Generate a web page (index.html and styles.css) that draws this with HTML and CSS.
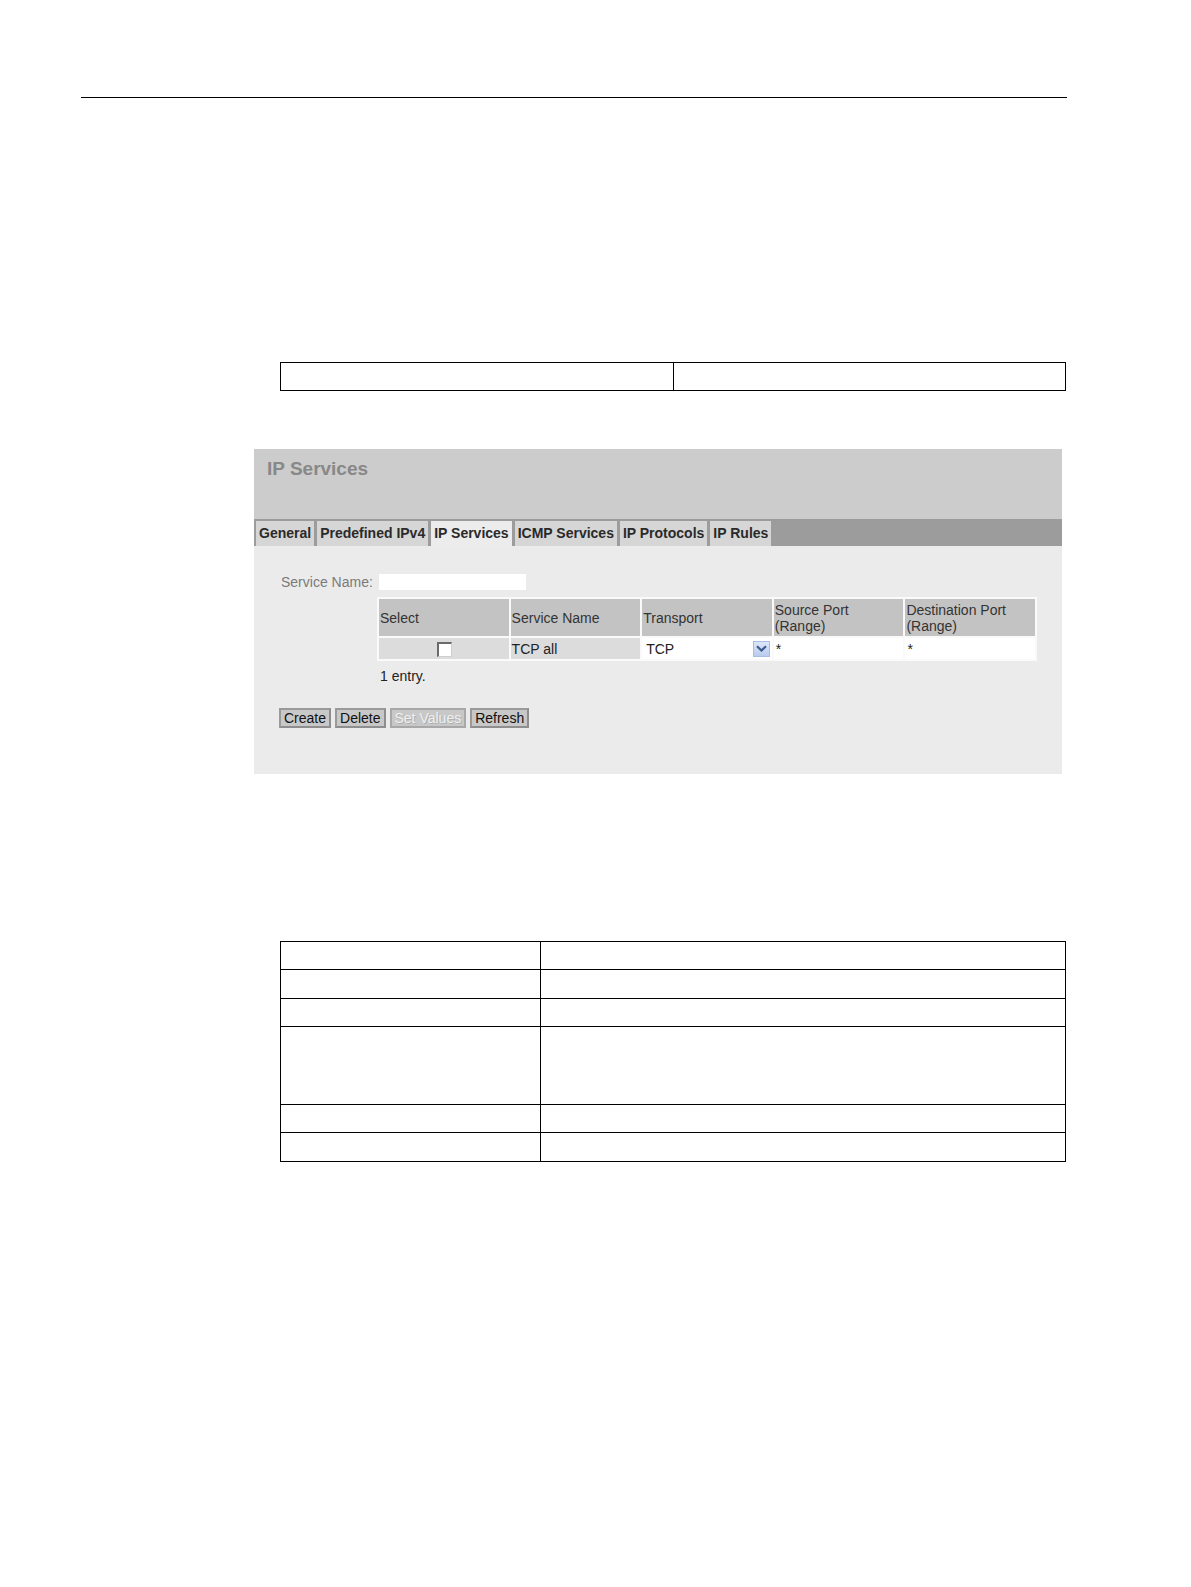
FILE: index.html
```html
<!DOCTYPE html>
<html lang="en">
<head>
<meta charset="utf-8">
<title>IP Services</title>
<link rel="stylesheet" href="styles.css">
</head>
<body>
<div class="page">
  <div class="rule"></div>

  <table class="doc-table doc-table-top">
    <tr><td class="c1"></td><td class="c2"></td></tr>
  </table>

  <div class="panel">
    <div class="panel-head">
      <h1 class="panel-title">IP Services</h1>
    </div>
    <div class="tabbar">
      <div class="tab">General</div>
      <div class="tab">Predefined IPv4</div>
      <div class="tab tab-active">IP Services</div>
      <div class="tab">ICMP Services</div>
      <div class="tab">IP Protocols</div>
      <div class="tab">IP Rules</div>
    </div>
    <div class="panel-body">
      <div class="name-row">
        <span class="name-label">Service Name:</span>
        <span class="name-input"></span>
      </div>
      <table class="svc-table">
        <thead>
          <tr>
            <th>Select</th>
            <th>Service Name</th>
            <th>Transport</th>
            <th>Source Port<br>(Range)</th>
            <th>Destination Port<br>(Range)</th>
          </tr>
        </thead>
        <tbody>
          <tr>
            <td class="cell-gray cell-center"><span class="checkbox"></span></td>
            <td class="cell-gray">TCP all</td>
            <td class="cell-white">
              <div class="select">
                <span class="select-value">TCP</span>
                <span class="select-arrow">
                  <svg width="11" height="7" viewBox="0 0 11 7"><path d="M1 1.2 L5.5 5.5 L10 1.2" fill="none" stroke="#3d5a8f" stroke-width="2.2"/></svg>
                </span>
              </div>
            </td>
            <td class="cell-white">*</td>
            <td class="cell-white">*</td>
          </tr>
        </tbody>
      </table>
      <div class="entries">1 entry.</div>
      <div class="buttons">
        <span class="btn">Create</span>
        <span class="btn">Delete</span>
        <span class="btn btn-disabled">Set Values</span>
        <span class="btn">Refresh</span>
      </div>
    </div>
  </div>

  <table class="doc-table doc-table-bottom">
    <tr class="r1"><td class="b1"></td><td class="b2"></td></tr>
    <tr class="r2"><td></td><td></td></tr>
    <tr class="r3"><td></td><td></td></tr>
    <tr class="r4"><td></td><td></td></tr>
    <tr class="r5"><td></td><td></td></tr>
    <tr class="r6"><td></td><td></td></tr>
  </table>
</div>
</body>
</html>
```

FILE: styles.css
```css
html, body {
  margin: 0;
  padding: 0;
  background: #ffffff;
}

body {
  font-family: "Liberation Sans", Arial, sans-serif;
  color: #000;
}

.page {
  padding-top: 97px;
}

.rule {
  margin-left: 81px;
  width: 986px;
  border-top: 1.5px solid #000;
}

/* document tables */
.doc-table {
  border-collapse: collapse;
  table-layout: fixed;
  margin-left: 280px;
  width: 786px;
}

.doc-table td {
  border: 1.5px solid #000;
  padding: 0;
}

.doc-table-top {
  margin-top: 264px;
}

.doc-table-top td {
  height: 27px;
}

.doc-table-top .c1 { width: 392px; }

.doc-table-bottom {
  margin-top: 167px;
}

.doc-table-bottom .b1 { width: 259px; }

.doc-table-bottom .r1 td { height: 27px; }
.doc-table-bottom .r2 td { height: 28px; }
.doc-table-bottom .r3 td { height: 27px; }
.doc-table-bottom .r4 td { height: 77px; }
.doc-table-bottom .r5 td { height: 27px; }
.doc-table-bottom .r6 td { height: 28px; }

/* screenshot panel */
.panel {
  margin-top: 58px;
  margin-left: 254px;
  width: 808px;
  height: 325px;
  display: flex;
  flex-direction: column;
  font-family: "Liberation Sans", Arial, sans-serif;
}

.panel-head {
  height: 70px;
  background: #cccccc;
  box-sizing: border-box;
  padding: 9px 0 0 13px;
}

.panel-title {
  margin: 0;
  font-size: 19px;
  font-weight: bold;
  color: #888888;
  line-height: 22px;
}

.tabbar {
  height: 27px;
  background: #9c9c9c;
  display: flex;
  align-items: flex-end;
  gap: 3px;
  padding-left: 2px;
}

.tab {
  height: 25px;
  box-sizing: border-box;
  background: #d6d6d6;
  color: #2a2a2a;
  font-size: 14px;
  font-weight: bold;
  padding: 3px 3px 0 3px;
  line-height: 18px;
  white-space: nowrap;
}

.tab-active {
  background: #ececec;
}

.panel-body {
  flex: 1;
  background: #ebebeb;
  padding: 28px 0 0 27px;
  font-size: 14px;
}

.name-row {
  display: flex;
  align-items: center;
  height: 16px;
}

.name-label {
  width: 98px;
  color: #7a7a7a;
  line-height: 16px;
}

.name-input {
  width: 147px;
  height: 16px;
  background: #ffffff;
}

.svc-table {
  margin-top: 7px;
  margin-left: 96px;
  width: 660px;
  table-layout: fixed;
  border-collapse: separate;
  border-spacing: 2px;
  background: #fafafa;
}

.svc-table th {
  background: #c3c3c3;
  color: #333;
  font-weight: normal;
  text-align: left;
  font-size: 14px;
  line-height: 16px;
  height: 37px;
  padding: 0 1px;
  vertical-align: middle;
}

.svc-table td {
  height: 21px;
  padding: 0 1px;
  color: #222;
  font-size: 14px;
  line-height: 16px;
  vertical-align: middle;
}

.cell-gray { background: #dcdcdc; }
.cell-white { background: #ffffff; }
.cell-center { text-align: center; }

.svc-table td.cell-white { padding: 0 2px; }

.checkbox {
  display: inline-block;
  width: 15px;
  height: 15px;
  box-sizing: border-box;
  background: #fff;
  border-top: 2px solid #6a6a6a;
  border-left: 2px solid #6a6a6a;
  border-right: 1px solid #cfcfcf;
  border-bottom: 1px solid #cfcfcf;
  vertical-align: middle;
  margin-left: 1px;
}

.select {
  display: flex;
  align-items: center;
  justify-content: space-between;
  height: 19px;
}

.select-value {
  padding-left: 2px;
}

.select-arrow {
  width: 17px;
  height: 16px;
  box-sizing: border-box;
  background: linear-gradient(#dde7f8, #b8cbee);
  border: 1px solid #a9bde3;
  display: flex;
  align-items: center;
  justify-content: center;
}

.entries {
  margin-top: 7px;
  margin-left: 99px;
  color: #222;
  line-height: 16px;
}

.buttons {
  margin-top: 24px;
  margin-left: -2px;
  display: flex;
  gap: 4px;
}

.btn {
  height: 20px;
  box-sizing: border-box;
  background: #c8c8c8;
  border: 2px solid #8e8e8e;
  border-top-color: #9a9a9a;
  border-left-color: #9a9a9a;
  padding: 0 3px;
  font-size: 14px;
  line-height: 16px;
  color: #111;
  white-space: nowrap;
}

.btn-disabled {
  color: #efefef;
  border-color: #a8a8a8;
  text-shadow: 1px 1px 0 #b0b0b0;
}
```
